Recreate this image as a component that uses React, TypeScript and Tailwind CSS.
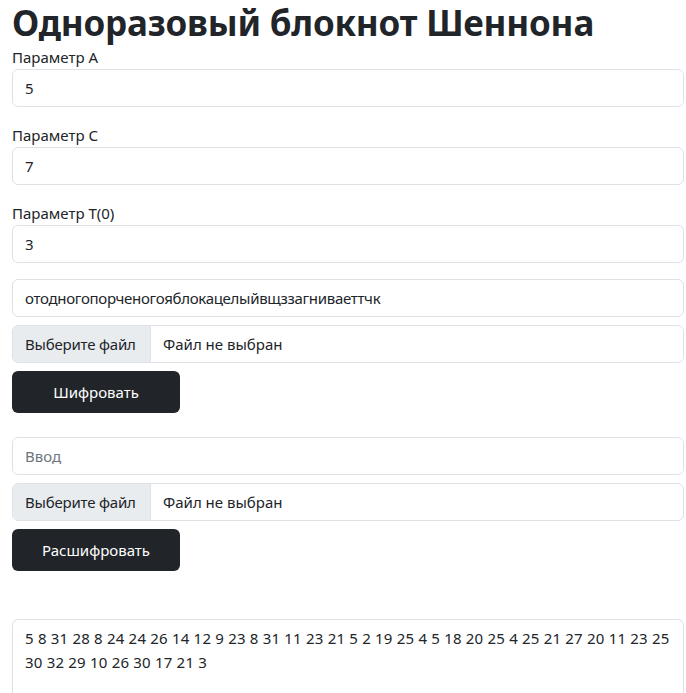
import React from "react";

const font = { fontFamily: '"Noto Sans", "Open Sans", sans-serif' };

function Field({ value, placeholder, className = "" }: { value?: string; placeholder?: string; className?: string }) {
  return (
    <div
      className={`h-[38px] w-full rounded-[6px] border border-[#dee2e6] bg-white px-3 flex items-center text-[15px] leading-6 whitespace-nowrap ${className}`}
    >
      {value ? (
        <span className="text-[#212529] tracking-[-0.3px]">{value}</span>
      ) : (
        <span className="text-[#6c757d]">{placeholder}</span>
      )}
    </div>
  );
}

function FileField({ className = "" }: { className?: string }) {
  return (
    <div
      className={`h-[38px] w-full rounded-[6px] border border-[#dee2e6] bg-white flex items-stretch overflow-hidden text-[15px] leading-6 whitespace-nowrap ${className}`}
    >
      <div className="bg-[#e9ecef] border-r border-[#dee2e6] pl-3 flex items-center text-[#212529] w-[138px] tracking-[-0.2px]">
        Выберите файл
      </div>
      <div className="px-3 flex items-center text-[#212529]">Файл не выбран</div>
    </div>
  );
}

function Btn({ children, className = "" }: { children: React.ReactNode; className?: string }) {
  return (
    <div
      className={`h-[42px] w-[168px] rounded-[6px] bg-[#212529] text-white flex items-center justify-center text-[15px] leading-6 ${className}`}
    >
      {children}
    </div>
  );
}

export default function App() {
  return (
    <div className="bg-white min-h-[693px] pl-3 pr-[2px] text-[#212529]" style={font}>
      <h1 className="text-[35px] font-bold leading-[45px] tracking-[-0.2px] whitespace-nowrap">
        Одноразовый блокнот Шеннона
      </h1>
      <div className="text-[15px] leading-6">Параметр А</div>
      <Field value="5" className="mb-4" />
      <div className="text-[15px] leading-6">Параметр С</div>
      <Field value="7" className="mb-4" />
      <div className="text-[15px] leading-6">Параметр T(0)</div>
      <Field value="3" className="mb-4" />
      <Field value="отодногопорченогояблокацелыйвщззагниваеттчк" className="mb-2" />
      <FileField className="mb-2" />
      <Btn className="mb-6">Шифровать</Btn>
      <Field placeholder="Ввод" className="mb-2" />
      <FileField className="mb-2" />
      <Btn className="mb-12">Расшифровать</Btn>
      <div className="h-[74px] w-full rounded-t-[6px] border border-b-0 border-[#dee2e6] px-3 pt-[6px] text-[15px] leading-6 overflow-hidden tracking-[0.2px]">
        <div className="whitespace-nowrap">
          5 8 31 28 8 24 24 26 14 12 9 23 8 31 11 23 21 5 2 19 25 4 5 18 20 25 4 25 21 27 20 11 23 25
        </div>
        <div className="whitespace-nowrap">30 32 29 10 26 30 17 21 3</div>
      </div>
    </div>
  );
}
